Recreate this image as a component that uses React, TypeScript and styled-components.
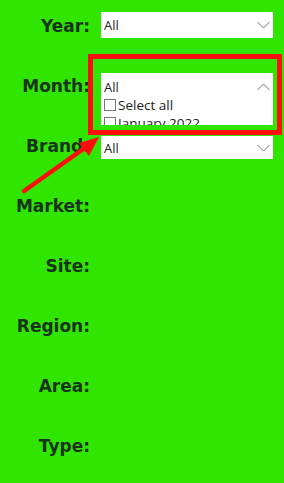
import React from "react";
import styled, {createGlobalStyle} from "styled-components";

const GlobalStyle = createGlobalStyle`
  html, body {
    margin: 0;
    padding: 0;
    background: #30e600;
  }
`

const Page = styled.div`
  position: relative;
  width: 284px;
  height: 483px;
  overflow: hidden;
  background: #30e600;
`

const Row = styled.div`
  display: grid;
  grid-template-columns: 90px 172px;
  column-gap: 11px;
  align-items: start;
  height: 60px;
`

const Label = styled.div`
  margin-top: 15px;
  text-align: right;
  font-family: "DejaVu Sans", Verdana, sans-serif;
  font-weight: bold;
  font-size: 17px;
  line-height: 22px;
  color: #17331a;
  white-space: nowrap;
`

const Select = styled.div<{ $top: number; $height: number }>`
  margin-top: ${p => p.$top}px;
  height: ${p => p.$height}px;
  background: #fff;
  display: flex;
  align-items: center;
  justify-content: space-between;
  padding: 0 3px;
  font-family: "Open Sans", "Noto Sans", sans-serif;
  font-size: 13px;
  color: #222;
`

const Panel = styled.div`
  margin-top: 13px;
  height: 52px;
  background: #fff;
  overflow: hidden;
  font-family: "Open Sans", "Noto Sans", sans-serif;
  color: #222;
`

const PanelHeader = styled.div`
  height: 23px;
  box-sizing: border-box;
  padding: 5px 3px 0;
  display: flex;
  justify-content: space-between;
  align-items: center;
  line-height: 18px;
  font-size: 13px;
`

const Option = styled.div`
  height: 18px;
  display: flex;
  align-items: center;
  gap: 2px;
  padding-left: 3px;
  font-size: 13.5px;
  white-space: nowrap;
`

const Box = styled.span`
  width: 10px;
  height: 10px;
  border: 1px solid #777;
  background: #fff;
  flex: none;
`

const Highlight = styled.div`
  position: absolute;
  left: 88px;
  top: 54px;
  width: 194px;
  height: 81px;
  box-sizing: border-box;
  border: 5px solid #ff0d0d;
  pointer-events: none;
`

const Annotation = styled.svg`
  position: absolute;
  left: 0;
  top: 0;
  pointer-events: none;
`

function Chevron({up}: { up?: boolean }) {
    return (
        <svg width="13" height="8" viewBox="0 0 13 8">
            <polyline points={up ? "0.5,7 6.5,1 12.5,7" : "0.5,1 6.5,7 12.5,1"}
                      fill="none" stroke="#777" strokeWidth="1"/>
        </svg>
    );
}

const others = ["Market:", "Site:", "Region:", "Area:", "Type:"];

function App() {
    return (
        <Page>
            <GlobalStyle/>
            <Row>
                <Label>Year:</Label>
                <Select $top={12} $height={26}>
                    <span>All</span>
                    <Chevron/>
                </Select>
            </Row>
            <Row>
                <Label>Month:</Label>
                <Panel>
                    <PanelHeader>
                        <span>All</span>
                        <Chevron up/>
                    </PanelHeader>
                    <Option><Box/>Select all</Option>
                    <Option><Box/>January 2022</Option>
                </Panel>
            </Row>
            <Row>
                <Label>Brand:</Label>
                <Select $top={16} $height={23}>
                    <span>All</span>
                    <Chevron/>
                </Select>
            </Row>
            {others.map(name =>
                <Row key={name}>
                    <Label>{name}</Label>
                </Row>
            )}
            <Highlight/>
            <Annotation width="284" height="483" viewBox="0 0 284 483">
                <line x1="24" y1="191" x2="86" y2="147" stroke="#ff0d0d" strokeWidth="4.5" strokeLinecap="round"/>
                <polygon points="99,137 79,143 89,156" fill="#ff0d0d"/>
            </Annotation>
        </Page>
    );
}

export default App;
